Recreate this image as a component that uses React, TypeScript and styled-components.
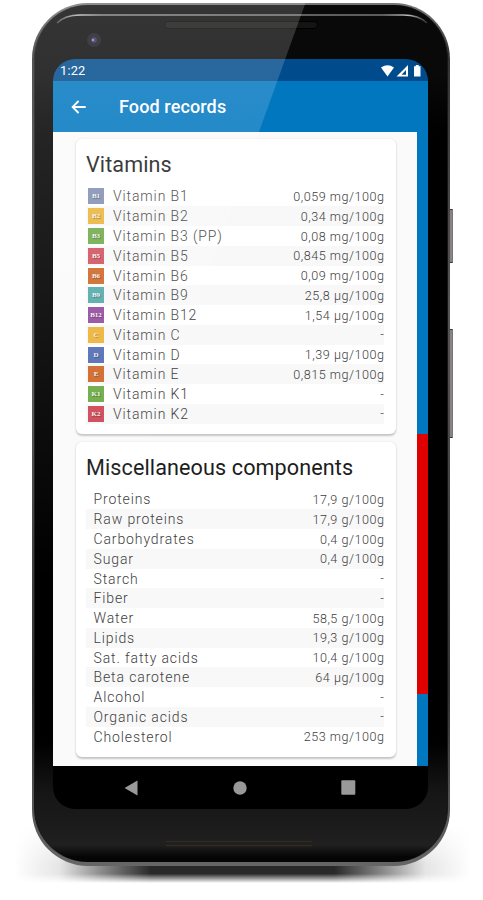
import React from "react";
import styled, { createGlobalStyle } from "styled-components";

const GlobalStyle = createGlobalStyle`
  * { box-sizing: border-box; }
  body { margin: 0; background: #fff; font-family: Roboto, "Liberation Sans", sans-serif; }
`;

const Stage = styled.main`
  position: relative;
  width: 483px;
  height: 900px;
  padding: 3px 0 0 32px;
  overflow: hidden;
  background: #fff;
`;

const FloorShadow = styled.div`
  position: absolute;
  left: 14px;
  top: 825px;
  width: 457px;
  height: 58px;
  background: linear-gradient(90deg, transparent, rgba(0, 0, 0, 0.1) 10%, rgba(0, 0, 0, 0.45) 19%, rgba(0, 0, 0, 0.84) 30%, rgba(0, 0, 0, 0.84) 70%, rgba(0, 0, 0, 0.45) 81%, rgba(0, 0, 0, 0.1) 90%, transparent);
  mask-image: linear-gradient(transparent, #000 68%, #000 84%, transparent 100%);
`;

const SideButton = styled.div<{ $top: number; $height: number }>`
  position: absolute;
  left: 448px;
  top: ${(p) => p.$top}px;
  width: 5px;
  height: ${(p) => p.$height}px;
  border: 1px solid #333;
  border-right-color: #777;
  border-radius: 1px;
  background: linear-gradient(90deg, #222 35%, #8b8383 45%);
`;

const Phone = styled.div`
  position: relative;
  width: 418px;
  height: 863px;
  padding: 2px;
  border-radius: 56px;
  background: linear-gradient(#777, #333 6%, #555 35%, #333 80%, #666);
`;

const Body = styled.div`
  position: relative;
  width: 414px;
  height: 857px;
  padding: 54px 0 0 18px;
  border-radius: 54px;
  overflow: hidden;
  background: linear-gradient(#090909 0 8%, #000 15% 86%, #161616 92%, #1a1a1a 95%, #202020 98%, #050505 99.4%);
  border-left: 1px solid #171717;
  border-right: 1px solid #171717;
`;

const Screen = styled.div`
  display: flex;
  flex-direction: column;
  width: 375px;
  height: 750px;
  border-radius: 22px;
  overflow: hidden;
  background: #000;
`;

const StatusBar = styled.div`
  display: flex;
  align-items: center;
  justify-content: space-between;
  height: 22px;
  flex: none;
  padding: 1px 6px 0 7px;
  background: #004b8b;
  color: #fff;
  font-size: 12.8px;
  letter-spacing: 0.2px;
`;

const AppBar = styled.header`
  display: flex;
  align-items: center;
  height: 51px;
  flex: none;
  padding-left: 18px;
  gap: 33px;
  background: #0077bf;
  color: #fff;
`;

const AppTitle = styled.h1`
  margin: 0;
  font-size: 18px;
  font-weight: 500;
  letter-spacing: 0.12px;
`;

const Content = styled.div`
  display: flex;
  height: 634px;
  flex: none;
`;

const Cards = styled.div`
  display: flex;
  flex-direction: column;
  gap: 8px;
  width: 364px;
  padding: 7px 21.5px 0 22.5px;
  background: #fafafa;
`;

const Card = styled.section<{ $height: number }>`
  height: ${(p) => p.$height}px;
  flex: none;
  padding: 11px 11.5px 0 10.5px;
  border-radius: 6px;
  background: #fff;
  box-shadow: 0 1.5px 2px rgba(0, 0, 0, 0.2), 0 0 3px rgba(0, 0, 0, 0.06);
`;

const CardTitle = styled.h2`
  height: 36.6px;
  margin: 0;
  color: #1c1c1c;
  font-size: 21.6px;
  line-height: 30px;
  font-weight: 400;
  letter-spacing: 0.1px;
  white-space: nowrap;
`;

const Row = styled.div<{ $iconed: boolean }>`
  display: flex;
  align-items: center;
  height: 19.78px;
  padding-left: ${(p) => (p.$iconed ? 2 : 7.5)}px;
  color: #404040;
  &:nth-child(odd) { background: #f8f8f8; }
`;

const Badge = styled.span<{ $color: string }>`
  display: flex;
  align-items: center;
  justify-content: center;
  width: 16px;
  height: 16px;
  margin-right: 9px;
  background: ${(p) => p.$color};
  color: #f4f4f4;
  font: bold 7px "Liberation Serif", serif;
  text-shadow: 1px 1px 1px rgba(0, 0, 0, 0.35);
`;

const Label = styled.span`
  flex: 1;
  font-size: 14px;
  font-weight: 300;
  letter-spacing: 0.88px;
`;

const Amount = styled.span`
  font-size: 12.6px;
  font-weight: 300;
  letter-spacing: 0.52px;
  margin-right: -0.5px;
`;

const ScrollStrip = styled.div`
  display: flex;
  flex-direction: column;
  width: 11px;
  padding-top: 301.5px;
  background: #0077bf;
`;

const ScrollThumb = styled.div`
  height: 260.5px;
  background: #df0000;
`;

const NavBar = styled.nav`
  display: flex;
  justify-content: space-between;
  align-items: center;
  height: 43px;
  padding: 0 72px 0 71px;
`;

const Overlay = styled.svg`
  position: absolute;
  left: 0;
  top: 0;
  pointer-events: none;
`;

const vitamins = [
  ["B1", "#8290b3", "Vitamin B1", "0,059 mg/100g"],
  ["B2", "#eab53d", "Vitamin B2", "0,34 mg/100g"],
  ["B3", "#70ab4b", "Vitamin B3 (PP)", "0,08 mg/100g"],
  ["B5", "#d25360", "Vitamin B5", "0,845 mg/100g"],
  ["B6", "#cf6828", "Vitamin B6", "0,09 mg/100g"],
  ["B9", "#55aaaa", "Vitamin B9", "25,8 µg/100g"],
  ["B12", "#954ca0", "Vitamin B12", "1,54 µg/100g"],
  ["C", "#edb338", "Vitamin C", "-"],
  ["D", "#526eb4", "Vitamin D", "1,39 µg/100g"],
  ["E", "#cf6828", "Vitamin E", "0,815 mg/100g"],
  ["K1", "#6baa45", "Vitamin K1", "-"],
  ["K2", "#cf4856", "Vitamin K2", "-"],
];

const components = [
  ["Proteins", "17,9 g/100g"],
  ["Raw proteins", "17,9 g/100g"],
  ["Carbohydrates", "0,4 g/100g"],
  ["Sugar", "0,4 g/100g"],
  ["Starch", "-"],
  ["Fiber", "-"],
  ["Water", "58,5 g/100g"],
  ["Lipids", "19,3 g/100g"],
  ["Sat. fatty acids", "10,4 g/100g"],
  ["Beta carotene", "64 µg/100g"],
  ["Alcohol", "-"],
  ["Organic acids", "-"],
  ["Cholesterol", "253 mg/100g"],
];

const StatusIcons = () => (
  <svg width="42" height="14" viewBox="0 0 42 14" fill="#fff">
    <path d="M1 3.5Q7.5-1 14 3.5L7.5 12.5Z" />
    <path d="M28 1v11.5H16.5ZM26 6l-4.5 4.8H26Z" fillRule="evenodd" />
    <path d="M34 2.2h1.8V1h2.9v1.2h1.8v10.3H34Z" />
  </svg>
);

const BackArrow = () => (
  <svg width="15" height="14" viewBox="0 0 15 14" fill="none" stroke="#fff" strokeWidth="1.8">
    <path d="M14.7 7H1.6M7.6 1 1.6 7l6 6" />
  </svg>
);

/* Earpiece, camera and the rim highlights drawn onto the phone casing. */
const Hardware = () => (
  <Overlay width="483" height="900">
    <defs>
      <linearGradient id="rim" x1="0" x2="1">
        <stop offset="0" stopColor="#aaa" stopOpacity="0.4" />
        <stop offset="0.06" stopColor="#bbb" />
        <stop offset="0.12" stopColor="#888" />
        <stop offset="0.88" stopColor="#777" />
        <stop offset="0.95" stopColor="#bbb" />
        <stop offset="1" stopColor="#999" stopOpacity="0.3" />
      </linearGradient>
      <linearGradient id="glare" x1="0" y1="0" x2="0" y2="1">
        <stop offset="0" stopColor="#fff" stopOpacity="0.18" />
        <stop offset="0.25" stopColor="#fff" stopOpacity="0.14" />
        <stop offset="1" stopColor="#fff" stopOpacity="0" />
      </linearGradient>
      <clipPath id="casing"><rect x="32" y="3" width="418" height="863" rx="56" /></clipPath>
    </defs>
    <path d="M57 23Q65 15 80 15H403Q419 15 427 23" fill="none" stroke="url(#rim)" strokeWidth="1.3" />
    <rect x="164.5" y="21.5" width="153" height="7" rx="3.5" fill="#151413" stroke="#000" />
    <circle cx="94" cy="40" r="7" fill="#1a181e" />
    <circle cx="94" cy="40" r="2.8" fill="#34345c" />
    <circle cx="93" cy="40" r="1.2" fill="#8a88d8" />
    <rect x="164" y="840" width="150" height="7" rx="3" fill="#22201d" />
    <path d="M166 841.5H312M166 845.5H312" stroke="#302d29" />
    <path d="M306.5 0 215 254 97 580H0V0Z" fill="url(#glare)" clipPath="url(#casing)" />
  </Overlay>
);

export default function App() {
  return (
    <>
      <GlobalStyle />
      <Stage>
        <FloorShadow />
        <SideButton $top={209} $height={54} />
        <SideButton $top={329} $height={109} />
        <Phone>
          <Body>
            <Screen>
              <StatusBar><span>1:22</span><StatusIcons /></StatusBar>
              <AppBar><BackArrow /><AppTitle>Food records</AppTitle></AppBar>
              <Content>
                <Cards>
                  <Card $height={295}>
                    <CardTitle>Vitamins</CardTitle>
                    {vitamins.map(([code, color, name, amount]) => (
                      <Row key={name} $iconed>
                        <Badge $color={color}>{code}</Badge>
                        <Label>{name}</Label>
                        <Amount>{amount}</Amount>
                      </Row>
                    ))}
                  </Card>
                  <Card $height={315}>
                    <CardTitle>Miscellaneous components</CardTitle>
                    {components.map(([name, amount]) => (
                      <Row key={name} $iconed={false}>
                        <Label>{name}</Label>
                        <Amount>{amount}</Amount>
                      </Row>
                    ))}
                  </Card>
                </Cards>
                <ScrollStrip><ScrollThumb /></ScrollStrip>
              </Content>
              <NavBar>
                <svg width="14" height="16"><path d="M13.5 .5v15L.5 8Z" fill="#999" /></svg>
                <svg width="14" height="14"><circle cx="7" cy="7" r="6.7" fill="#999" /></svg>
                <svg width="15" height="15"><rect x=".3" y=".3" width="14" height="14.4" rx="1" fill="#999" /></svg>
              </NavBar>
            </Screen>
          </Body>
        </Phone>
        <Hardware />
      </Stage>
    </>
  );
}
